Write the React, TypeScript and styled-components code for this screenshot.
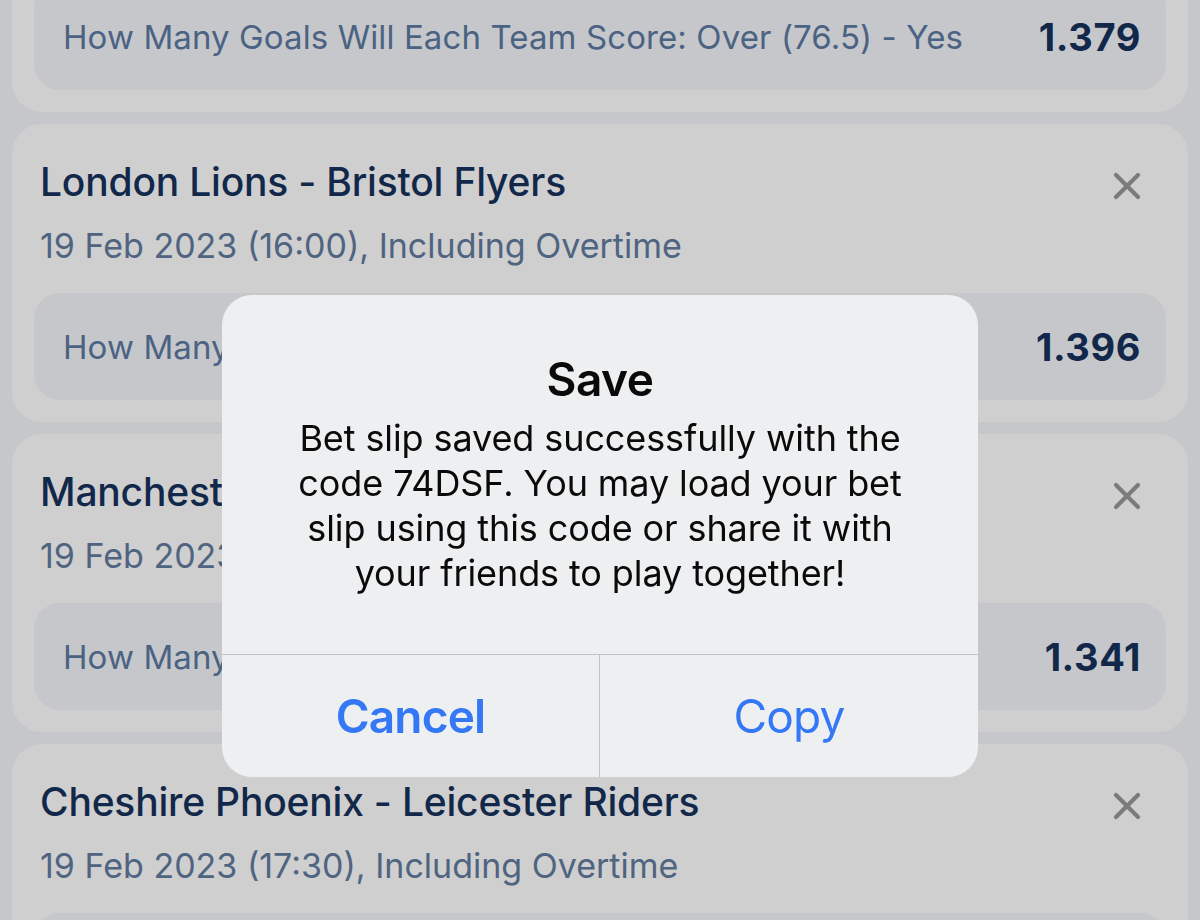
import React from "react";
import styled, { createGlobalStyle } from "styled-components";

const Global = createGlobalStyle`
  html, body { margin: 0; padding: 0; }
  body {
    background: #c6c7cb;
    font-family: Inter, "Noto Sans", "Liberation Sans", sans-serif;
    overflow: hidden;
    width: 1200px;
    height: 920px;
  }
`;

const List = styled.div`
  display: flex;
  flex-direction: column;
  gap: 12px;
  padding: 0 12px;
  margin-top: -186px;
`;

const Card = styled.div`
  background: #cfcfcf;
  border-radius: 30px;
  padding: 34px 22px 22px 22px;
  display: flex;
  flex-direction: column;
`;

const Head = styled.div`
  display: flex;
  justify-content: space-between;
  align-items: flex-start;
  padding: 0 25px 0 6px;
`;

const Title = styled.div`
  font-size: 39px;
  line-height: 47px;
  font-weight: 500;
  color: #12284a;
  letter-spacing: -0.2px;
`;

const CloseBtn = styled.div`
  width: 28px;
  height: 28px;
  margin-top: 14px;
  display: flex;
`;

const DateLine = styled.div`
  margin-top: 20px;
  padding-left: 6px;
  font-size: 34px;
  line-height: 41px;
  color: #4f6480;
  letter-spacing: 0px;
`;

const Selection = styled.div`
  margin-top: 27px;
  height: 107px;
  background: #c6c7cb;
  border-radius: 26px;
  display: flex;
  align-items: center;
  justify-content: space-between;
  padding: 0 25px 0 29px;
`;

const SelText = styled.div`
  font-size: 33px;
  color: #4b6382;
  letter-spacing: 0.1px;
`;

const Odds = styled.div`
  font-size: 38px;
  font-weight: 700;
  color: #12284a;
  letter-spacing: 0.6px;
`;

const Overlay = styled.div`
  position: fixed;
  inset: 0;
  display: flex;
  justify-content: center;
  align-items: flex-start;
  padding-top: 295px;
`;

const Alert = styled.div`
  width: 756px;
  background: #eeeff0;
  border-radius: 30px;
  overflow: hidden;
  display: flex;
  flex-direction: column;
`;

const AlertBody = styled.div`
  padding: 56px 30px 58px;
  display: flex;
  flex-direction: column;
  align-items: center;
  text-align: center;
`;

const AlertTitle = styled.div`
  font-size: 46px;
  line-height: 57px;
  font-weight: 600;
  color: #0a0a0a;
  letter-spacing: -0.5px;
`;

const AlertMsg = styled.div`
  margin-top: 8px;
  font-size: 36px;
  line-height: 45px;
  color: #0a0a0a;
  white-space: pre-line;
  letter-spacing: -0.1px;
`;

const Buttons = styled.div`
  display: grid;
  grid-template-columns: 1fr 1fr;
  border-top: 1.5px solid #c3c3c7;
  height: 122px;
`;

const AlertButton = styled.div<{ $bold?: boolean; $divider?: boolean }>`
  display: flex;
  align-items: center;
  justify-content: center;
  font-size: 46px;
  font-weight: ${(p) => (p.$bold ? 600 : 400)};
  color: #3478f6;
  letter-spacing: -0.8px;
  border-right: ${(p) => (p.$divider ? "1px solid #c3c3c7" : "none")};
`;

const XIcon = () => (
  <svg width="28" height="28" viewBox="0 0 28 28">
    <path
      d="M3 3 L25 25 M25 3 L3 25"
      stroke="#7b7b7b"
      strokeWidth="4.2"
      strokeLinecap="round"
      fill="none"
    />
  </svg>
);

const bets = [
  {
    title: "Newcastle Eagles - Surrey Scorchers",
    date: "19 Feb 2023 (14:00), Including Overtime",
    sel: "How Many Goals Will Each Team Score: Over (76.5) - Yes",
    odds: "1.379",
  },
  {
    title: "London Lions - Bristol Flyers",
    date: "19 Feb 2023 (16:00), Including Overtime",
    sel: "How Many Goals Will Each Team Score: Over (78.5) - Yes",
    odds: "1.396",
  },
  {
    title: "Manchester Giants - Sheffield Sharks",
    date: "19 Feb 2023 (17:00), Including Overtime",
    sel: "How Many Goals Will Each Team Score: Over (75.5) - Yes",
    odds: "1.341",
  },
  {
    title: "Cheshire Phoenix - Leicester Riders",
    date: "19 Feb 2023 (17:30), Including Overtime",
    sel: "How Many Goals Will Each Team Score: Over (77.5) - Yes",
    odds: "1.362",
  },
];

export default function App() {
  return (
    <>
      <Global />
      <List>
        {bets.map((b) => (
          <Card key={b.title}>
            <Head>
              <Title>{b.title}</Title>
              <CloseBtn>
                <XIcon />
              </CloseBtn>
            </Head>
            <DateLine>{b.date}</DateLine>
            <Selection>
              <SelText>{b.sel}</SelText>
              <Odds>{b.odds}</Odds>
            </Selection>
          </Card>
        ))}
      </List>
      <Overlay>
        <Alert>
          <AlertBody>
            <AlertTitle>Save</AlertTitle>
            <AlertMsg>
              {"Bet slip saved successfully with the\ncode 74DSF. You may load your bet\nslip using this code or share it with\nyour friends to play together!"}
            </AlertMsg>
          </AlertBody>
          <Buttons>
            <AlertButton $bold $divider>
              Cancel
            </AlertButton>
            <AlertButton>Copy</AlertButton>
          </Buttons>
        </Alert>
      </Overlay>
    </>
  );
}
